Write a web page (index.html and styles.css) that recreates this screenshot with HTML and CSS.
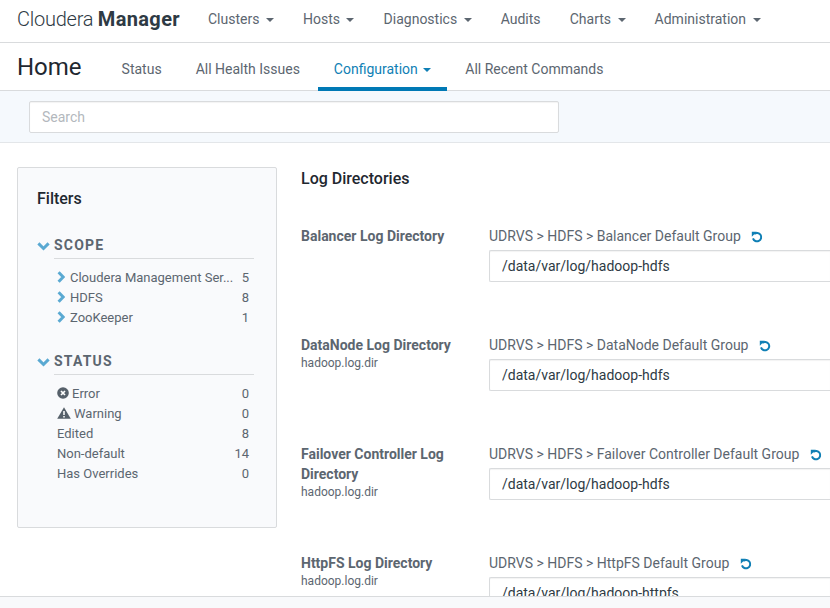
FILE: index.html
```html
<!DOCTYPE html>
<html lang="en">
<head>
    <meta charset="UTF-8">
    <meta name="viewport" content="width=device-width, initial-scale=1.0">
    <title>Cloudera Manager</title>
    <link rel="stylesheet" href="styles.css">
</head>
<body>
<svg class="icon-defs" width="0" height="0">
    <symbol id="revert" viewBox="0 0 12 12">
        <path d="M3.2 3A4.2 4.2 0 1 1 2 7.4" fill="none" stroke="currentColor" stroke-width="2"/>
        <path d="M.8 .8L5.8 .8L.8 5.8Z" fill="currentColor"/>
    </symbol>
    <symbol id="chev-down" viewBox="0 0 13 9">
        <path d="M1.4 1.4L6.5 6.5L11.6 1.4" fill="none" stroke="currentColor" stroke-width="3"/>
    </symbol>
    <symbol id="chev-right" viewBox="0 0 8 12">
        <path d="M1.6 1.2L6.2 6L1.6 10.8" fill="none" stroke="currentColor" stroke-width="3"/>
    </symbol>
</svg>
<header class="topbar">
    <div class="brand">Cloudera <b>Manager</b></div>
    <nav class="topnav">
        <a>Clusters <i class="caret"></i></a>
        <a>Hosts <i class="caret"></i></a>
        <a>Diagnostics <i class="caret"></i></a>
        <a>Audits</a>
        <a>Charts <i class="caret"></i></a>
        <a>Administration <i class="caret"></i></a>
    </nav>
</header>
<div class="tabbar">
    <h1>Home</h1>
    <a class="tab">Status</a>
    <a class="tab">All Health Issues</a>
    <a class="tab active">Configuration <i class="caret"></i></a>
    <a class="tab">All Recent Commands</a>
</div>
<div class="searchband">
    <input class="search" type="text" placeholder="Search">
</div>
<main class="content">
    <aside class="filters">
        <h3>Filters</h3>
        <div class="group-title first">
            <svg class="chev-down"><use href="#chev-down"/></svg><span>SCOPE</span>
        </div>
        <ul class="scope">
            <li><svg class="chev-right"><use href="#chev-right"/></svg><span class="name">Cloudera Management Ser...</span><span class="num">5</span></li>
            <li><svg class="chev-right"><use href="#chev-right"/></svg><span class="name">HDFS</span><span class="num">8</span></li>
            <li><svg class="chev-right"><use href="#chev-right"/></svg><span class="name">ZooKeeper</span><span class="num">1</span></li>
        </ul>
        <div class="group-title">
            <svg class="chev-down"><use href="#chev-down"/></svg><span>STATUS</span>
        </div>
        <ul class="status">
            <li><svg class="st-icon" viewBox="0 0 12 12"><circle cx="6" cy="6" r="5.8" fill="#56606a"/><path d="M4 4L8 8M8 4L4 8" stroke="#fff" stroke-width="1.7"/></svg><span class="name">Error</span><span class="num">0</span></li>
            <li><svg class="st-icon wide" viewBox="0 0 14 12"><path d="M7 .3L13.8 11.8H.2Z" fill="#56606a"/><path d="M7 4V8M7 9V10.6" stroke="#fff" stroke-width="1.5"/></svg><span class="name">Warning</span><span class="num">0</span></li>
            <li><span class="name">Edited</span><span class="num">8</span></li>
            <li><span class="name">Non-default</span><span class="num">14</span></li>
            <li><span class="name">Has Overrides</span><span class="num">0</span></li>
        </ul>
    </aside>
    <section class="configs">
        <h2>Log Directories</h2>
        <div class="row">
            <div class="label"><strong>Balancer Log Directory</strong></div>
            <div class="field">
                <div class="path">UDRVS &gt; HDFS &gt; Balancer Default Group <svg class="revert"><use href="#revert"/></svg></div>
                <input class="value" type="text" value="/data/var/log/hadoop-hdfs">
            </div>
        </div>
        <div class="row">
            <div class="label"><strong>DataNode Log Directory</strong><small>hadoop.log.dir</small></div>
            <div class="field">
                <div class="path">UDRVS &gt; HDFS &gt; DataNode Default Group <svg class="revert"><use href="#revert"/></svg></div>
                <input class="value" type="text" value="/data/var/log/hadoop-hdfs">
            </div>
        </div>
        <div class="row">
            <div class="label"><strong>Failover Controller Log Directory</strong><small>hadoop.log.dir</small></div>
            <div class="field">
                <div class="path">UDRVS &gt; HDFS &gt; Failover Controller Default Group <svg class="revert"><use href="#revert"/></svg></div>
                <input class="value" type="text" value="/data/var/log/hadoop-hdfs">
            </div>
        </div>
        <div class="row">
            <div class="label"><strong>HttpFS Log Directory</strong><small>hadoop.log.dir</small></div>
            <div class="field">
                <div class="path">UDRVS &gt; HDFS &gt; HttpFS Default Group <svg class="revert"><use href="#revert"/></svg></div>
                <input class="value" type="text" value="/data/var/log/hadoop-httpfs">
            </div>
        </div>
    </section>
</main>
<footer class="footer"></footer>
</body>
</html>
```

FILE: styles.css
```css
* {
    box-sizing: border-box;
}
html, body {
    height: 100%;
}
body {
    margin: 0;
    display: flex;
    flex-direction: column;
    overflow: hidden;
    font-family: Roboto, "Liberation Sans", sans-serif;
    font-size: 14px;
    color: #5c6670;
    background: #fff;
}
.icon-defs {
    position: absolute;
}

.topbar {
    flex: none;
    height: 43px;
    display: flex;
    align-items: center;
    padding: 0 0 4px 17px;
    border-bottom: 1px solid #d9dbdd;
}
.brand {
    width: 191px;
    font-size: 20px;
    font-weight: 300;
    letter-spacing: -0.25px;
    color: #2e3a44;
    white-space: nowrap;
}
.brand b {
    font-weight: 700;
    letter-spacing: 0.35px;
}
.topnav {
    display: flex;
    gap: 29.1px;
}
.caret {
    display: inline-block;
    width: 0;
    height: 0;
    margin-left: 3px;
    vertical-align: middle;
    border-top: 4px solid currentColor;
    border-left: 4px solid transparent;
    border-right: 4px solid transparent;
}

.tabbar {
    flex: none;
    height: 48px;
    display: flex;
    align-items: stretch;
    gap: 2px;
    padding-left: 17px;
    border-bottom: 1px solid #d9dbdd;
}
.tabbar h1 {
    margin: 0 22px 0 0;
    font-size: 24px;
    font-weight: 400;
    line-height: 49px;
    color: #1f2830;
}
.tab {
    padding: 0 16px;
    line-height: 52px;
    height: 48px;
}
.tab.active {
    color: #0f7fb5;
    border-bottom: 4px solid #0079b5;
}
.tab.active .caret {
    margin-left: 2px;
}

.searchband {
    flex: none;
    height: 52px;
    padding: 10px 29px;
    background: #f5f9fd;
    border-bottom: 1px solid #e3e6e9;
}
.search {
    display: block;
    width: 530px;
    height: 32px;
    padding: 0 12px;
    font: 14px Roboto, sans-serif;
    border: 1px solid #d9dbdd;
    border-radius: 2px;
    background: #fff;
    box-shadow: inset 0 1px 1px rgba(0, 0, 0, 0.05);
}
.search::placeholder {
    color: #b3b8bd;
}

.content {
    flex: 1;
    min-height: 0;
    overflow: hidden;
    display: flex;
    align-items: flex-start;
    padding: 24px 0 0 17px;
}

.filters {
    flex: none;
    width: 260px;
    height: 361px;
    padding: 21px 22px 0 19px;
    background: #f9fafc;
    border: 1px solid #d9dbdd;
    border-radius: 2px;
}
.filters h3 {
    margin: 0;
    font-size: 16px;
    font-weight: 500;
    line-height: 20px;
    color: #1f2830;
}
.group-title {
    display: flex;
    align-items: center;
    margin-top: 22px;
    height: 26px;
    font-size: 14px;
    font-weight: 700;
    letter-spacing: 1.2px;
}
.group-title.first {
    margin-top: 24px;
}
.group-title span {
    flex: 1;
    height: 26px;
    line-height: 24px;
    border-bottom: 1px solid #d9dbdd;
}
.chev-down {
    width: 13px;
    height: 9px;
    margin-right: 4px;
    flex: none;
    color: #5aa9d2;
}
.chev-right {
    width: 8px;
    height: 12px;
    margin-right: 5px;
    flex: none;
    color: #5aa9d2;
}
.filters ul {
    list-style: none;
    margin: 8px 0 0;
    padding: 0 5px 0 20px;
    font-size: 13px;
}
.filters li {
    display: flex;
    align-items: center;
    height: 20px;
}
.name {
    flex: 1;
    min-width: 0;
    white-space: nowrap;
}
.num {
    flex: none;
    margin-left: 7px;
}
.st-icon {
    width: 12px;
    height: 12px;
    margin-right: 3px;
    flex: none;
}
.st-icon.wide {
    width: 14px;
}

.configs {
    flex: 1;
    min-width: 0;
    padding: 1px 0 0 24px;
}
.configs h2 {
    margin: 0 0 37px;
    font-size: 16px;
    font-weight: 500;
    line-height: 22px;
    color: #1f2830;
}
.row {
    display: flex;
    height: 109px;
}
.label {
    flex: none;
    width: 188px;
    padding-right: 20px;
    line-height: 20px;
    margin-top: -1px;
}
.label strong {
    display: block;
    font-weight: 700;
}
.label small {
    display: block;
    font-size: 12px;
    line-height: 16px;
}
.field {
    flex: 1;
    min-width: 0;
}
.path {
    height: 20px;
    line-height: 18px;
    white-space: nowrap;
}
.revert {
    width: 12px;
    height: 12px;
    margin-left: 7px;
    vertical-align: -2px;
    color: #0f7fb5;
}
.value {
    display: block;
    width: 100%;
    height: 32px;
    margin-top: 3px;
    padding: 0 12px;
    font: 14px Roboto, sans-serif;
    color: #2e3a44;
    border: 1px solid #d9dbdd;
    border-right: none;
    border-radius: 2px 0 0 2px;
    background: #fff;
    box-shadow: inset 0 1px 1px rgba(0, 0, 0, 0.05);
}

.footer {
    flex: none;
    height: 12px;
    background: #f8f9fb;
    border-top: 1px solid #d9dbdd;
}
```
